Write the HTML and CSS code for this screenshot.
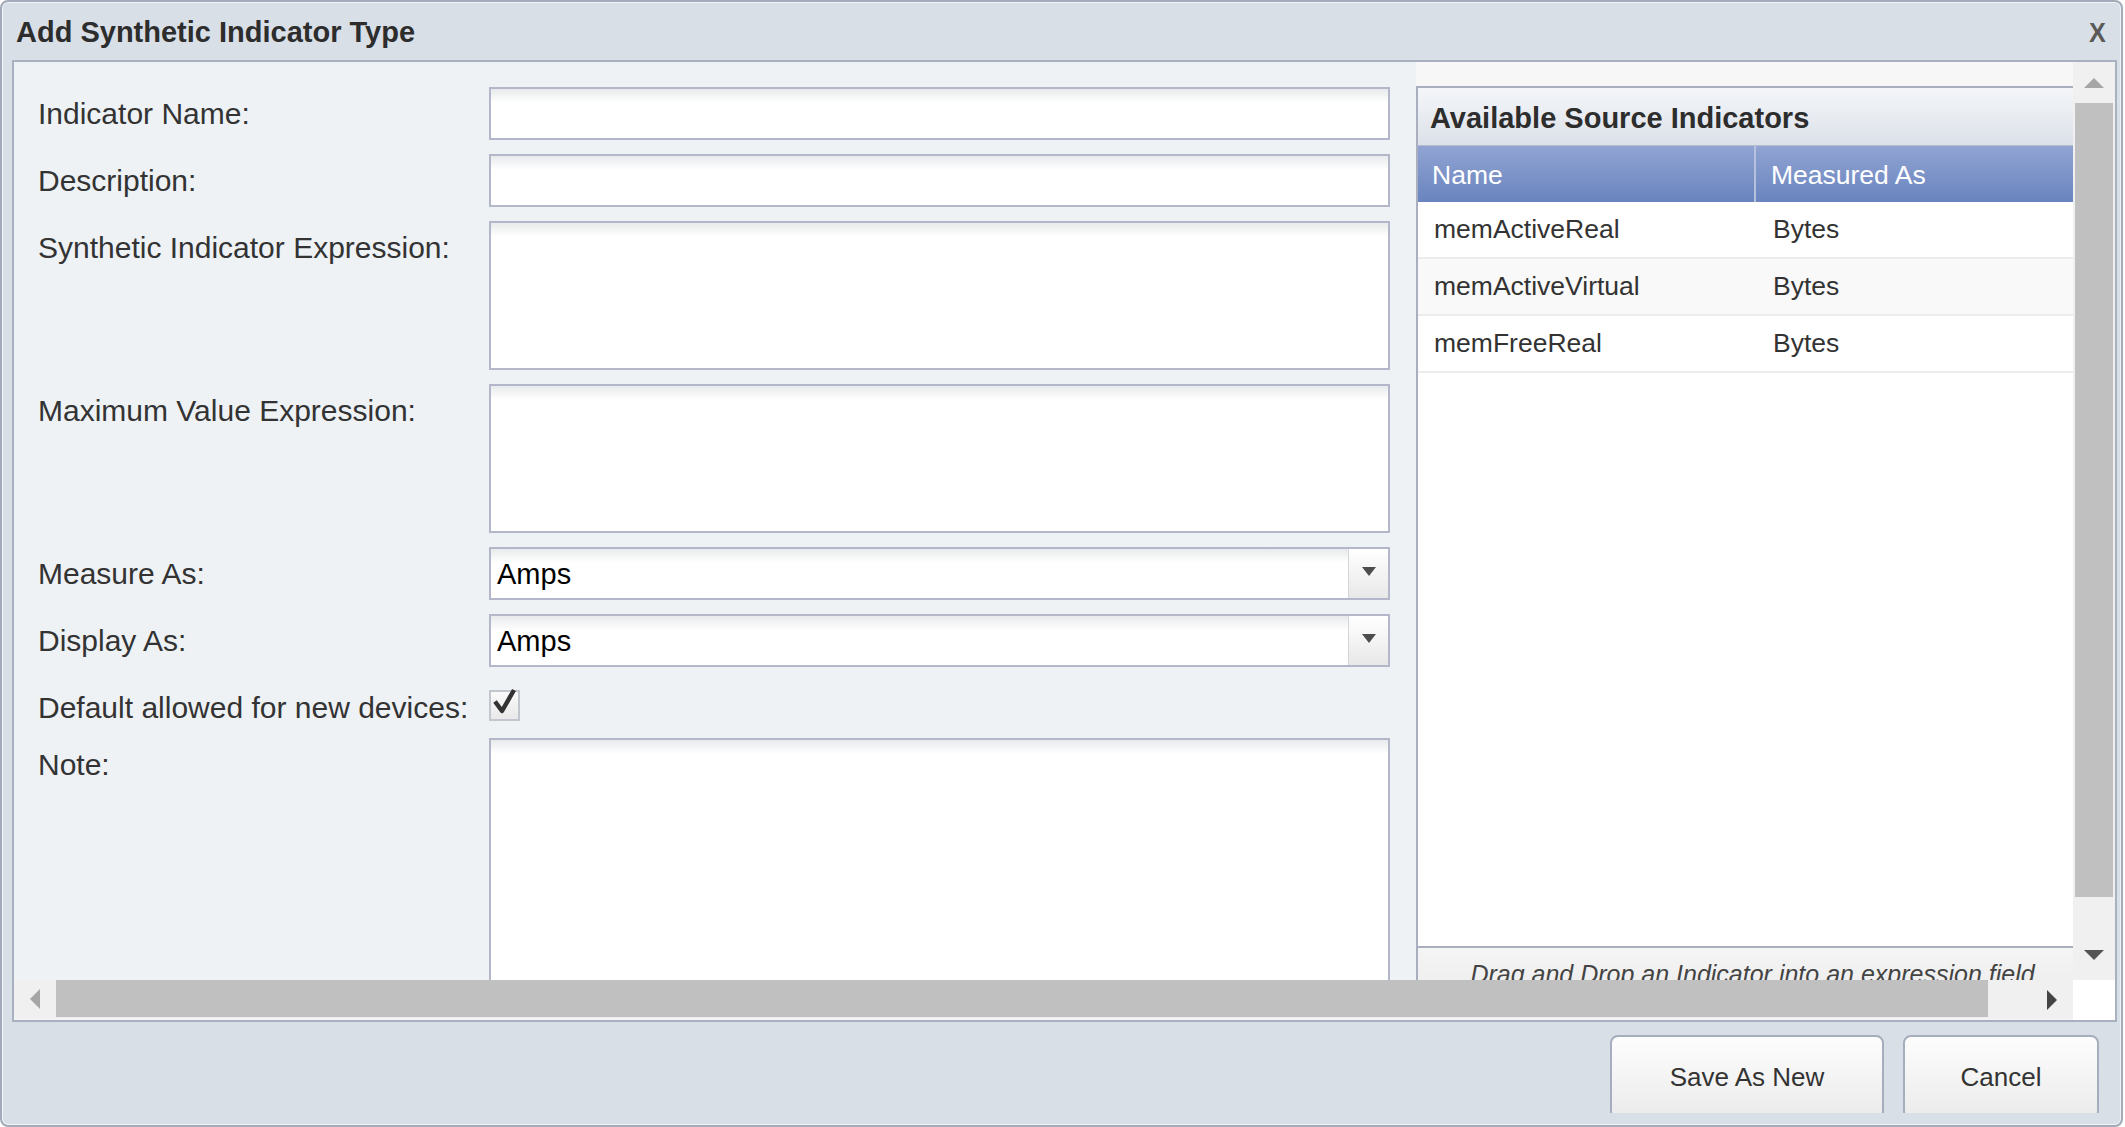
FILE: index.html
```html
<!DOCTYPE html>
<html lang="en">
<head>
    <meta charset="UTF-8">
    <title>Add Synthetic Indicator Type</title>
    <link rel="stylesheet" href="styles.css">
</head>
<body>
<div class="dialog">
    <div class="titlebar">
        <span class="title">Add Synthetic Indicator Type</span>
        <span class="close">X</span>
    </div>

    <div class="frame">
        <!-- form -->
        <div class="form">
            <div class="row">
                <label>Indicator Name:</label>
                <div class="field"></div>
            </div>
            <div class="row">
                <label>Description:</label>
                <div class="field"></div>
            </div>
            <div class="row">
                <label>Synthetic Indicator Expression:</label>
                <div class="field area"></div>
            </div>
            <div class="row">
                <label>Maximum Value Expression:</label>
                <div class="field area"></div>
            </div>
            <div class="row">
                <label>Measure As:</label>
                <div class="field select">
                    <span class="value">Amps</span>
                    <span class="trigger"><svg width="14" height="9" viewBox="0 0 14 9"><path d="M0 0H14L7 9Z" fill="#4d4d4d"/></svg></span>
                </div>
            </div>
            <div class="row">
                <label>Display As:</label>
                <div class="field select">
                    <span class="value">Amps</span>
                    <span class="trigger"><svg width="14" height="9" viewBox="0 0 14 9"><path d="M0 0H14L7 9Z" fill="#4d4d4d"/></svg></span>
                </div>
            </div>
            <div class="row check-row">
                <label>Default allowed for new devices:</label>
                <span class="checkbox"><svg width="27" height="27" viewBox="0 0 27 27"><path d="M4 13.5L11 23L23 2" fill="none" stroke="#333" stroke-width="4.4" stroke-linejoin="round"/></svg></span>
            </div>
            <div class="row">
                <label>Note:</label>
                <div class="field note"></div>
            </div>
        </div>

        <!-- source indicators -->
        <div class="sources">
            <div class="grid">
                <div class="grid-title">Available Source Indicators</div>
                <div class="grid-head">
                    <div class="col-name">Name</div>
                    <div class="col-unit">Measured As</div>
                </div>
                <div class="grid-row">
                    <div class="col-name">memActiveReal</div>
                    <div class="col-unit">Bytes</div>
                </div>
                <div class="grid-row alt">
                    <div class="col-name">memActiveVirtual</div>
                    <div class="col-unit">Bytes</div>
                </div>
                <div class="grid-row">
                    <div class="col-name">memFreeReal</div>
                    <div class="col-unit">Bytes</div>
                </div>
                <div class="grid-empty"></div>
                <div class="grid-foot">Drag and Drop an Indicator into an expression field</div>
            </div>
        </div>

        <!-- scrollbars -->
        <div class="vscroll">
            <svg class="arrow-up" width="20" height="10" viewBox="0 0 20 10"><path d="M0 10H20L10 0Z" fill="#a6a6a6"/></svg>
            <div class="vthumb"></div>
            <svg class="arrow-down" width="20" height="10" viewBox="0 0 20 10"><path d="M0 0H20L10 10Z" fill="#555"/></svg>
        </div>
        <div class="hscroll">
            <svg class="arrow-left" width="10" height="20" viewBox="0 0 10 20"><path d="M10 0V20L0 10Z" fill="#a6a6a6"/></svg>
            <div class="hthumb"></div>
            <svg class="arrow-right" width="10" height="20" viewBox="0 0 10 20"><path d="M0 0V20L10 10Z" fill="#444"/></svg>
        </div>
        <div class="corner"></div>
    </div>

    <div class="footer">
        <button class="btn save">Save As New</button>
        <button class="btn cancel">Cancel</button>
    </div>
</div>
</body>
</html>
```

FILE: styles.css
```css
body{
    margin: 0;
    font-family: "Liberation Sans", Arial, sans-serif;
    color: #333;
    background: #fff;
}
.dialog{
    width: 2123px;
    height: 1127px;
    box-sizing: border-box;
    border: 2px solid #a3abb8;
    border-radius: 8px;
    padding: 1px;
    background: #d8dfe7;
    box-shadow: inset 0 0 0 1px #f0f3f7;
    display: flex;
    flex-direction: column;
}
.titlebar{
    height: 57px;
    flex: none;
    display: flex;
    align-items: center;
    justify-content: space-between;
    padding: 2px 13px 0 13px;
    box-sizing: border-box;
}
.title{
    font-size: 29px;
    font-weight: bold;
    color: #2d2d2d;
}
.close{
    font-size: 28px;
    font-weight: bold;
    color: #5a5a5a;
    transform: scaleX(0.9);
}

/* main frame */
.frame{
    margin: 0 3px 0 9px;
    border: 2px solid #a9b0bf;
    display: grid;
    grid-template-columns: 1402px 657px 42px;
    grid-template-rows: 918px 40px;
    background: #fff;
    flex: none;
}
.form{
    background: #eef2f5;
    padding: 25px 26px 0 24px;
    overflow: hidden;
}
.row{
    display: flex;
    margin-bottom: 14px;
}
.row.check-row{
    margin-bottom: 12px;
}
.row label{
    width: 451px;
    flex: none;
    font-size: 30px;
    line-height: 36px;
    padding-top: 9px;
    color: #333;
}
.field{
    flex: 1;
    height: 53px;
    box-sizing: border-box;
    border: 2px solid #b4b7ca;
    background: linear-gradient(#e8eaeb, #fff 14px);
}
.field.area{
    height: 149px;
}
.field.note{
    height: 300px;
}
.select{
    display: flex;
}
.select .value{
    flex: 1;
    font-size: 29px;
    line-height: 51px;
    padding-left: 6px;
    color: #000;
}
.select .trigger{
    width: 40px;
    border-left: 1px solid #d3d5db;
    background: linear-gradient(#fff, #e8e8e8);
    display: flex;
    align-items: center;
    justify-content: center;
    padding-bottom: 4px;
    box-sizing: border-box;
}
.checkbox{
    width: 31px;
    height: 31px;
    margin-top: 9px;
    box-sizing: border-box;
    border: 2px solid #c2c6cf;
    background: linear-gradient(#fafafa, #e9e9e9);
    display: flex;
    align-items: flex-start;
    justify-content: center;
}
.checkbox svg{
    margin-top: -4px;
}

/* source indicators */
.sources{
    background: #f7f7f7;
    padding-top: 24px;
    overflow: hidden;
}
.grid{
    border-left: 2px solid #a9afbf;
    border-top: 2px solid #a9afbf;
    background: #fff;
}
.grid-title{
    height: 58px;
    box-sizing: border-box;
    padding: 3px 0 0 12px;
    font-size: 29px;
    font-weight: bold;
    line-height: 54px;
    color: #2d2d2d;
    background: linear-gradient(#f4f6f9, #dce1e9);
    border-bottom: 1px solid #b3bac9;
}
.grid-head{
    display: flex;
    height: 56px;
    line-height: 58px;
    font-size: 26.5px;
    color: #fff;
    background: linear-gradient(#91a4d2, #6984bf);
}
.grid-head .col-name{
    border-right: 2px solid #b5c1dd;
}
.col-name{
    width: 338px;
    box-sizing: border-box;
    padding-left: 14px;
}
.col-unit{
    padding-left: 15px;
}
.grid-row{
    display: flex;
    height: 57px;
    box-sizing: border-box;
    line-height: 55px;
    font-size: 26.5px;
    color: #333;
    border-bottom: 2px solid #ececec;
}
.grid-row .col-name{
    padding-left: 16px;
}
.grid-row .col-unit{
    padding-left: 17px;
}
.grid-row.alt{
    background: #f9f9f9;
}
.grid-empty{
    height: 573px;
}
.grid-foot{
    height: 60px;
    border-top: 2px solid #a9afbf;
    background: linear-gradient(#f5f5f5, #e8e8e8);
    text-align: center;
    font-size: 25px;
    font-style: italic;
    line-height: 30px;
    padding-top: 11px;
    padding-left: 14px;
    color: #444;
}

/* scrollbars */
.vscroll{
    background: #f0f0f0;
    display: flex;
    flex-direction: column;
    align-items: center;
}
.arrow-up{
    margin-top: 16px;
}
.vthumb{
    width: 38px;
    height: 794px;
    margin-top: 15px;
    background: #c0c0c0;
}
.arrow-down{
    margin-top: 53px;
}
.hscroll{
    grid-column: 1 / span 2;
    background: #f0f0f0;
    display: flex;
    align-items: flex-start;
    border-bottom: 2px solid #f3f3f3;
}
.arrow-left{
    margin: 9px 0 0 16px;
}
.hthumb{
    width: 1932px;
    height: 37px;
    margin-left: 16px;
    background: #c0c0c0;
}
.arrow-right{
    margin: 10px 0 0 59px;
}
.corner{
    background: #fff;
}

/* buttons */
.footer{
    height: 91px;
    flex: none;
    overflow: hidden;
    display: flex;
    justify-content: flex-end;
    gap: 19px;
    padding: 13px 21px 0 0;
    box-sizing: border-box;
}
.btn{
    height: 84px;
    flex: none;
    box-sizing: border-box;
    border: 2px solid #a6adbc;
    border-radius: 8px;
    background: linear-gradient(#fdfdfd, #ebebeb);
    font-family: "Liberation Sans", Arial, sans-serif;
    font-size: 26px;
    color: #333;
    padding: 0;
}
.btn.save{
    width: 274px;
}
.btn.cancel{
    width: 196px;
}
```
